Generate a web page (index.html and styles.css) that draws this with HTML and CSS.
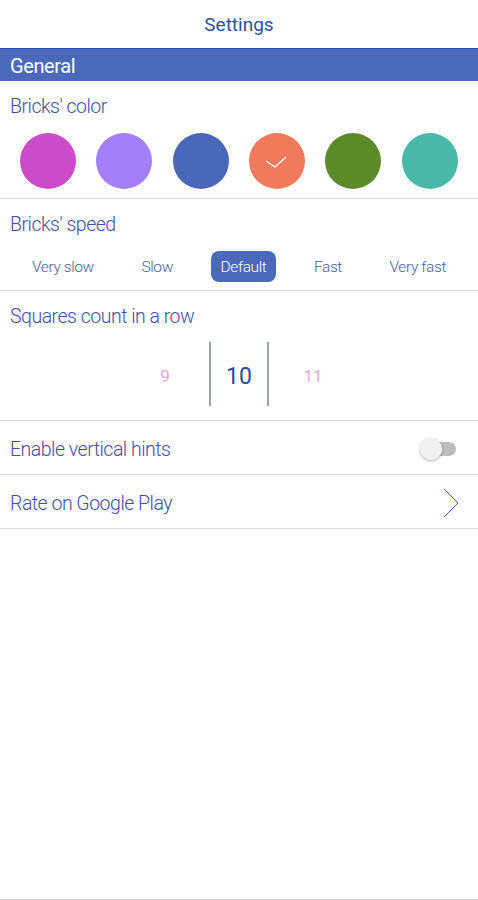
FILE: index.html
```html
<!DOCTYPE html>
<html lang="en">
<head>
<meta charset="UTF-8">
<meta name="viewport" content="width=device-width, initial-scale=1.0">
<title>Settings</title>
<link rel="stylesheet" href="styles.css">
</head>
<body>
<div class="page">
    <div class="topbar">Settings</div>
    <div class="section-title">General</div>

    <div class="setting">
        <div class="label">Bricks' color</div>
        <div class="colors">
            <div class="swatch-cell"><span class="swatch" style="background:#cc4bcb"></span></div>
            <div class="swatch-cell"><span class="swatch" style="background:#a37ff9"></span></div>
            <div class="swatch-cell"><span class="swatch" style="background:#4a68b9"></span></div>
            <div class="swatch-cell">
                <span class="swatch" style="background:#f07a5b">
                    <svg width="56" height="56" viewBox="0 0 56 56">
                        <polyline points="17,28 26,34 37,24" fill="none" stroke="#fff" stroke-width="1.3"/>
                    </svg>
                </span>
            </div>
            <div class="swatch-cell"><span class="swatch" style="background:#5d8a29"></span></div>
            <div class="swatch-cell"><span class="swatch" style="background:#4ab8a8"></span></div>
        </div>
    </div>

    <div class="setting setting-speed">
        <div class="label">Bricks' speed</div>
        <div class="speeds">
            <span class="speed">Very slow</span>
            <span class="speed">Slow</span>
            <span class="speed active">Default</span>
            <span class="speed">Fast</span>
            <span class="speed">Very fast</span>
        </div>
    </div>

    <div class="setting setting-picker">
        <div class="label">Squares count in a row</div>
        <div class="picker">
            <span class="pick side">9</span>
            <span class="pick current">10</span>
            <span class="pick side">11</span>
        </div>
    </div>

    <div class="row">
        <span class="label">Enable vertical hints</span>
        <span class="toggle"><span class="knob"></span></span>
    </div>

    <div class="row">
        <span class="label">Rate on Google Play</span>
        <svg class="chevron" width="16" height="30" viewBox="0 0 16 30">
            <polyline points="1,1 15,15 1,29" fill="none" stroke="#4a5ca8" stroke-width="1"/>
        </svg>
    </div>
</div>
</body>
</html>
```

FILE: styles.css
```css
body {
    font-family: Roboto, "Liberation Sans", sans-serif;
    margin: 0;
    padding: 0;
    background-color: #fff;
}
.page {
    height: 900px;
    box-sizing: border-box;
    border-bottom: 1px solid #d0d0d0;
}
.topbar {
    height: 48px;
    line-height: 50px;
    text-align: center;
    font-size: 19px;
    color: #2d4fa3;
    border-bottom: 1px solid #2a52a8;
}
.section-title {
    height: 32px;
    line-height: 34px;
    padding-left: 10px;
    background-color: #4a69bb;
    color: #fff;
    font-size: 20px;
    letter-spacing: -0.4px;
}
.setting {
    border-bottom: 1px solid #d8d8d8;
    padding: 13px 0 9px;
}
.setting-speed {
    padding-bottom: 8px;
}
.setting-picker {
    padding-bottom: 14px;
}
.label {
    font-size: 19.5px;
    font-weight: 300;
    letter-spacing: -0.5px;
    color: #3f50a0;
    line-height: 26px;
    padding-left: 10px;
}
.colors {
    display: flex;
    padding: 0 10px;
    margin-top: 13px;
}
.swatch-cell {
    flex: 1;
    display: flex;
    justify-content: center;
}
.swatch {
    width: 56px;
    height: 56px;
    border-radius: 50%;
    display: block;
}
.swatch svg {
    display: block;
}
.speeds {
    display: flex;
    justify-content: space-between;
    align-items: center;
    padding: 0 22px;
    margin-top: 13px;
}
.speed {
    font-size: 15.5px;
    font-weight: 300;
    letter-spacing: -0.4px;
    color: #4d5c9f;
    padding: 0 10px;
    height: 31px;
    line-height: 33px;
    border-radius: 8px;
}
.speed.active {
    background-color: #4a69bb;
    color: #fff;
}
.picker {
    display: flex;
    justify-content: center;
    margin-top: 12px;
}
.pick {
    height: 64px;
    line-height: 69px;
    text-align: center;
}
.side {
    width: 88px;
    font-size: 17px;
    color: #e3a8e0;
}
.current {
    width: 56px;
    border-left: 2px solid #9aa6a4;
    border-right: 2px solid #9aa6a4;
    font-size: 23px;
    color: #2b4b9b;
}
.row {
    height: 53px;
    display: flex;
    align-items: center;
    justify-content: space-between;
    border-bottom: 1px solid #d8d8d8;
    padding-right: 19px;
}
.row .label {
    padding-top: 4px;
}
.toggle {
    position: relative;
    width: 28px;
    height: 14px;
    border-radius: 7px;
    background-color: #bdbdbd;
    margin-top: 2px;
    margin-right: 3px;
}
.knob {
    position: absolute;
    left: -8px;
    top: -4px;
    width: 22px;
    height: 22px;
    border-radius: 50%;
    background-color: #f1f1f1;
    box-shadow: 0 1px 3px rgba(0, 0, 0, 0.3);
}
.chevron {
    margin-top: 2px;
}
```
